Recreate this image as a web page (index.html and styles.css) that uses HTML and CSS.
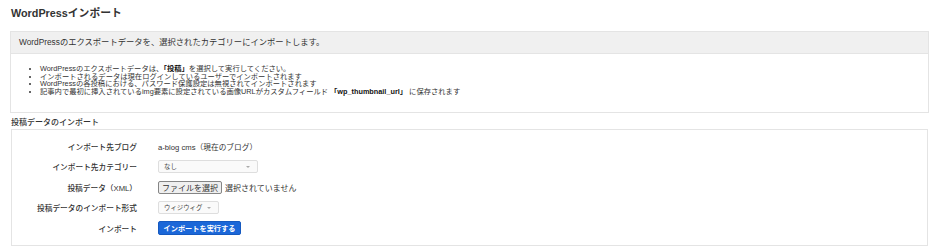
FILE: index.html
```html
<!DOCTYPE html>
<html lang="ja">
  <head>
    <meta charset="UTF-8" />
    <meta name="viewport" content="width=device-width, initial-scale=1.0" />
    <link rel="stylesheet" href="styles.css">
    <title>WordPressインポート</title>
  </head>
  <body>
    <h1 class="title">WordPressインポート</h1>

    <section class="panel">
      <div class="panel-head">WordPressのエクスポートデータを、選択されたカテゴリーにインポートします。</div>
      <ul class="notes">
        <li>WordPressのエクスポートデータは、<b>「投稿」</b>を選択して実行してください。</li>
        <li>インポートされるデータは現在ログインしているユーザーでインポートされます</li>
        <li>WordPressの各投稿における、パスワード保護設定は無視されてインポートされます</li>
        <li>記事内で最初に挿入されているimg要素に設定されている画像URLがカスタムフィールド <b>「wp_thumbnail_url」</b> に保存されます</li>
      </ul>
    </section>

    <h2 class="subtitle">投稿データのインポート</h2>

    <form class="form-box">
      <div class="label">インポート先ブログ</div>
      <div class="value">a-blog cms（現在のブログ）</div>

      <div class="label">インポート先カテゴリー</div>
      <div class="value">
        <span class="select wide">なし<span class="caret"></span></span>
      </div>

      <div class="label">投稿データ（XML）</div>
      <div class="value">
        <span class="file-btn">ファイルを選択</span>
        <span class="file-name">選択されていません</span>
      </div>

      <div class="label">投稿データのインポート形式</div>
      <div class="value">
        <span class="select">ウィジウィグ<span class="caret"></span></span>
      </div>

      <div class="label">インポート</div>
      <div class="value">
        <button type="button" class="btn-primary">インポートを実行する</button>
      </div>
    </form>
  </body>
</html>
```

FILE: styles.css
```css
* {
  box-sizing: border-box;
  margin: 0;
  padding: 0;
  --text: #333;
  --line: #e4e4e4;
  --head: #f0f0f0;
  --blue: #1b67d8;
}

body {
  padding: 6px 11px 0 10px;
  font-family: 'Liberation Sans', 'Noto Sans CJK JP', sans-serif;
  font-size: 7.7px;
  color: var(--text);
  background-color: white;
}

.title {
  font-size: 10.8px;
  font-weight: bold;
  line-height: 14px;
  padding-left: 1px;
  margin-bottom: 11px;
}

.panel {
  border: 1px solid var(--line);
  height: 82px;
}

.panel-head {
  height: 22px;
  line-height: 21px;
  padding-left: 8px;
  font-size: 8.3px;
  background-color: var(--head);
  border-bottom: 1px solid var(--line);
}

.notes {
  margin-top: 11px;
  padding-left: 29px;
  font-size: 7.3px;
}

.notes li {
  height: 7.5px;
  line-height: 7.5px;
}

.notes b {
  font-weight: bold;
  color: #111;
}

.subtitle {
  font-size: 8px;
  font-weight: 500;
  line-height: 10px;
  margin: 5px 0 1px 1px;
}

.form-box {
  display: grid;
  grid-template-columns: 125px 1fr;
  grid-auto-rows: 20.5px;
  column-gap: 21px;
  margin-left: 1px;
  margin-right: 1px;
  padding: 6px 0 6px;
  border: 1px solid var(--line);
}

.label,
.value {
  display: flex;
  align-items: center;
}

.label {
  justify-content: flex-end;
  font-weight: 500;
}

.select {
  position: relative;
  display: inline-flex;
  align-items: center;
  width: 61px;
  height: 13px;
  padding-left: 5px;
  font-size: 6.4px;
  color: #444;
  background-color: #fafafa;
  border: 1px solid #dedede;
  border-radius: 2px;
}

.select.wide {
  width: 100px;
}

.caret {
  position: absolute;
  right: 7px;
  top: 5px;
  border-left: 2px solid transparent;
  border-right: 2px solid transparent;
  border-top: 2px solid #aaa;
}

.file-btn {
  display: inline-flex;
  align-items: center;
  height: 13px;
  padding: 0 3px;
  font-size: 8px;
  background-color: #efefef;
  border: 1px solid #858585;
  border-radius: 2px;
}

.file-name {
  margin-left: 3px;
  font-size: 8px;
}

.btn-primary {
  width: 83px;
  height: 14px;
  font-family: inherit;
  font-size: 7.2px;
  font-weight: bold;
  color: white;
  background-color: var(--blue);
  border: 1px solid #1559c0;
  border-radius: 2px;
}
```
